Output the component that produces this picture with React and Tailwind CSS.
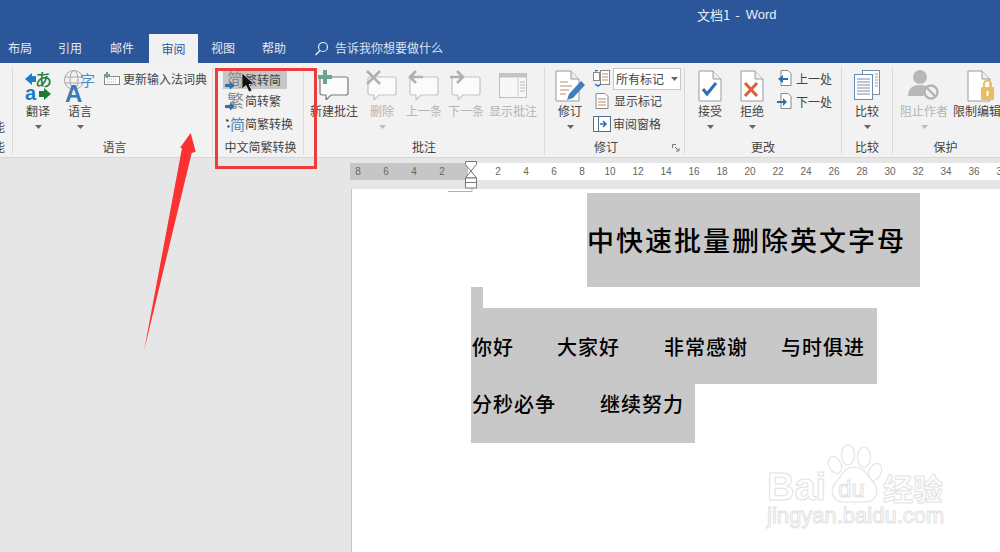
// App.jsx
import React from 'react';

const cjk = { fontFamily: '"Noto Sans CJK SC", sans-serif' };

const Caret = ({ muted }) => (
  <svg width="7" height="4" viewBox="0 0 7 4" className="block">
    <path d="M0 0h7L3.5 4z" fill={muted ? '#bdbdbd' : '#666'} />
  </svg>
);

// word page with folded corner, shared by the change buttons
const Page = ({ children }) => (
  <svg width="26" height="32" viewBox="0 0 26 32">
    <path d="M2 1h14l8 8v22H2z" fill="#fff" stroke="#9a9a9a" />
    <path d="M16 1v8h8" fill="#eee" stroke="#9a9a9a" />
    {children}
  </svg>
);

const Bubble = ({ color = '#7a7a7a' }) => (
  <g fill="#fbfbfb" stroke={color} strokeWidth="1.2">
    <path d="M4 7h24a2 2 0 0 1 2 2v14a2 2 0 0 1-2 2H13l-5 5v-5H4a2 2 0 0 1-2-2V9a2 2 0 0 1 2-2z" />
  </g>
);

const NewComment = () => (
  <svg width="32" height="30" viewBox="0 0 32 30">
    <Bubble />
    <path d="M5 0h4v5h5v4H9v5H5V9H0V5h5z" fill="#6ba58f" />
  </svg>
);
const DeleteComment = () => (
  <svg width="32" height="30" viewBox="0 0 32 30">
    <Bubble color="#c4c4c4" />
    <path d="M1 1l13 13M14 1L1 14" stroke="#b0b0b0" strokeWidth="2.6" />
  </svg>
);
const PrevComment = () => (
  <svg width="32" height="30" viewBox="0 0 32 30">
    <Bubble color="#c4c4c4" />
    <path d="M15 7H3M8 1L2 7l6 6" stroke="#b0b0b0" strokeWidth="2.6" fill="none" />
  </svg>
);
const NextComment = () => (
  <svg width="32" height="30" viewBox="0 0 32 30">
    <Bubble color="#c4c4c4" />
    <path d="M0 7h12M7 1l6 6-6 6" stroke="#b0b0b0" strokeWidth="2.6" fill="none" />
  </svg>
);
const ShowComments = () => (
  <svg width="28" height="28" viewBox="0 0 28 28">
    <rect x="0.5" y="3.5" width="27" height="24" fill="#f7f7f7" stroke="#c0c0c0" />
    <rect x="0.5" y="3.5" width="27" height="4" fill="#c4c4c4" />
    <path d="M19 8v20" stroke="#cfcfcf" />
    <path d="M21 12h5M21 15h5M21 18h5M21 21h5" stroke="#bdbdbd" />
  </svg>
);

const TranslateIcon = () => (
  <svg width="30" height="32" viewBox="0 0 30 32">
    <text x="12" y="16" fontSize="17" fontWeight="500" fill="#2c7a3d" style={cjk}>あ</text>
    <path d="M2 9l7-6v3h4v6H9v3z" fill="#1e7cc8" />
    <text x="2" y="30" fontSize="20" fontWeight="700" fill="#1e7cc8" style={{ fontFamily: '"Liberation Sans", sans-serif' }}>a</text>
    <path d="M28 24l-7 6v-3h-5v-6h5v-3z" fill="#1f7a38" />
  </svg>
);

const LanguageIcon = () => (
  <svg width="34" height="33" viewBox="0 0 34 33">
    <g fill="none" stroke="#a8a8a8">
      <circle cx="11" cy="10" r="9.5" />
      <ellipse cx="11" cy="10" rx="4" ry="9.5" />
      <path d="M2 7h18M2 13h18" />
    </g>
    <text x="17" y="16" fontSize="15" fill="#3f8fc9" style={cjk}>字</text>
    <text x="2" y="32" fontSize="24" fontWeight="700" fill="#3a78b8" style={{ fontFamily: '"Liberation Sans", sans-serif' }}>A</text>
  </svg>
);

const KeyboardIcon = () => (
  <svg width="16" height="14" viewBox="0 0 16 14">
    <rect x="0.5" y="4.5" width="15" height="8" fill="#fff" stroke="#888" />
    <path d="M3 7h10M3 10h10" stroke="#aaa" strokeDasharray="1 1" />
    <path d="M2 0h2v2h2v2H4v2H2V4H0V2h2z" fill="#6ba58f" />
  </svg>
);

const ConvertIcon = ({ glyph, arrow = true, blue }) => (
  <svg width="20" height="20" viewBox="0 0 20 20">
    <text x={blue ? 5 : 2} y="16" fontSize={blue ? 15 : 17} fill={blue ? '#4a86b8' : '#8a8a8a'} style={cjk}>{glyph}</text>
    {arrow ? (
      <path d="M0 14h5v-2.500l5 4-5 4V17H0z" fill="#2f6fb0" />
    ) : (
      <path d="M1 5l3 1-1 2-2-1zM3 11l2 1-1 2-2-1z" fill="#555" />
    )}
  </svg>
);

const TrackIcon = () => (
  <svg width="32" height="32" viewBox="0 0 32 32">
    <path d="M2 1h15l8 8v22H2z" fill="#fff" stroke="#999" />
    <path d="M17 1v8h8" fill="#eee" stroke="#999" />
    <path d="M6 12h8M6 16h12M6 20h9M6 24h6" stroke="#b98f6a" />
    <path d="M13 30l2-6L27 11l4 4-12 13z" fill="#3f7fbf" />
  </svg>
);

const SmallPage = () => (
  <svg width="14" height="16" viewBox="0 0 14 16">
    <path d="M1 .5h9l3 3v12H1z" fill="#fff" stroke="#888" />
    <path d="M3 6h8M3 9h8M3 12h8" stroke="#b98f6a" />
  </svg>
);

const MarkupIcon = () => (
  <svg width="18" height="18" viewBox="0 0 18 18">
    <rect x="7.5" y="0.5" width="9" height="14" fill="#fff" stroke="#888" />
    <path d="M9 4h6M9 7h6M9 10h6" stroke="#b98f6a" />
    <rect x="0.5" y="2.5" width="6" height="8" fill="#fff" stroke="#888" />
    <path d="M2 14l3 2 3-2M2 1l3-1" stroke="#2f6fb0" fill="none" strokeWidth="1.5" />
  </svg>
);

const PaneIcon = () => (
  <svg width="18" height="16" viewBox="0 0 18 16">
    <rect x="0.5" y="0.5" width="17" height="15" fill="#fff" stroke="#4d6f96" />
    <path d="M5.5 1v14" stroke="#4d6f96" />
    <path d="M7 8h5M10 5l3 3-3 3" stroke="#2f6fb0" strokeWidth="1.6" fill="none" />
  </svg>
);

const AcceptIcon = () => (
  <Page>
    <path d="M6 19l4 5 9-11" stroke="#2f6fb0" strokeWidth="3" fill="none" />
  </Page>
);
const RejectIcon = () => (
  <Page>
    <path d="M6 13l12 13M18 13L6 26" stroke="#d9603b" strokeWidth="3" />
  </Page>
);

const ChangeNavIcon = ({ flip }) => (
  <svg width="16" height="17" viewBox="0 0 16 17">
    <path d="M4 .5h7l3 3v12H4z" fill="#fff" stroke="#888" />
    {flip ? (
      <path d="M0 8h6V5l4 4-4 4v-3H0z" fill="#2f6fb0" />
    ) : (
      <path d="M11 8H6V5L1 9l5 4v-3h5z" fill="#2f6fb0" />
    )}
  </svg>
);

const CompareIcon = () => (
  <svg width="26" height="30" viewBox="0 0 26 30">
    <rect x="8.5" y="0.5" width="17" height="24" fill="#fff" stroke="#7d8da0" />
    <rect x="0.5" y="4.5" width="18" height="25" fill="#fff" stroke="#5f8db8" />
    <path d="M3 9h13M3 12h13M3 15h13M3 18h13M3 21h13M3 24h13" stroke="#7d8da0" />
    <path d="M21 4h3M21 7h3M21 10h3M21 13h3M21 16h3" stroke="#999" />
  </svg>
);

const BlockAuthorIcon = () => (
  <svg width="32" height="30" viewBox="0 0 32 30">
    <circle cx="12" cy="7" r="7" fill="#b8b8b8" />
    <path d="M0 26c0-8 5-11 12-11s9 3 10 5l-7 6z" fill="#b8b8b8" />
    <circle cx="23" cy="22" r="6.5" fill="#f1f1f1" stroke="#b4b4b4" strokeWidth="2.4" />
    <path d="M18.5 17.5l9 9" stroke="#b4b4b4" strokeWidth="2.4" />
  </svg>
);

const RestrictIcon = () => (
  <svg width="28" height="32" viewBox="0 0 28 32" className="ml-[8px]">
    <path d="M1 1h14l8 8v22H1z" fill="#fff" stroke="#9a9a9a" />
    <path d="M15 1v8h8" fill="#eee" stroke="#9a9a9a" />
    <rect x="14" y="17" width="13" height="13" rx="1" fill="#eabd62" />
    <path d="M17 17v-3a3.5 3.5 0 0 1 7 0v3" stroke="#eabd62" strokeWidth="2" fill="none" />
    <rect x="19.5" y="21" width="2" height="5" fill="#fff" />
  </svg>
);

const BigButton = ({ icon, label, width, caret, muted, className = '' }) => (
  <div className={`flex flex-col items-center shrink-0 ${className}`} style={{ width }}>
    <div className="flex items-start justify-center h-[33px]">{icon}</div>
    <span className={`text-[12px] leading-[16px] whitespace-nowrap ${muted ? 'text-[#b4b4b4]' : 'text-[#444]'}`}>{label}</span>
    {caret && <div className="mt-[6px]"><Caret muted={muted} /></div>}
  </div>
);

const Group = ({ width, label, children, noBorder }) => (
  <div
    className={`relative flex flex-col shrink-0 mt-[4px] mb-[2px] ${noBorder ? '' : 'border-r border-[#dadada]'}`}
    style={{ width }}
  >
    <div className="flex-1 flex items-start min-h-0">{children}</div>
    <div className="h-[18px] -mb-[1px] text-center text-[12px] leading-[18px] text-[#444] whitespace-nowrap">{label}</div>
  </div>
);

const SmallRow = ({ icon, label, className = 'h-[23px]' }) => (
  <div className={`flex items-center text-[12px] text-[#444] whitespace-nowrap ${className}`}>
    {icon}
    <span>{label}</span>
  </div>
);

const tabs = [
  ['布局', 'w-[50px]'],
  ['引用', 'w-[52px]'],
  ['邮件', 'w-[39px]'],
];

const leftNums = [8, 6, 4, 2];
const rightNums = [2, 4, 6, 8, 10, 12, 14, 16, 18, 20, 22, 24, 26, 28, 30, 32, 34, 36, 38];

export default function App() {
  return (
    <div className="relative w-[1000px] h-[552px] overflow-hidden bg-[#e6e6e6] flex flex-col" style={cjk}>
      {/* title bar */}
      <div className="h-[35px] bg-[#2b579a] flex items-center pb-[6px] pl-[697px] text-[13px] text-[#e8eef7] shrink-0">
        <span>文档1</span>
        <span className="ml-[5px]">-</span>
        <span className="ml-[6px]" style={{ fontFamily: '"Liberation Sans", sans-serif' }}>Word</span>
      </div>

      {/* tabs */}
      <div className="h-[28px] bg-[#2b579a] flex items-end text-[12px] text-[#e3eaf4] shrink-0 pl-[8px]">
        {tabs.map(([t, w]) => (
          <div key={t} className={`${w} h-full flex items-center pb-[2px] shrink-0`}>{t}</div>
        ))}
        <div className="w-[49px] h-[29px] bg-[#f1f1f1] text-[#2b579a] flex items-center justify-center shrink-0">审阅</div>
        <div className="w-[51px] h-full flex items-center pb-[2px] pl-[13px] shrink-0">视图</div>
        <div className="w-[52px] h-full flex items-center pb-[2px] pl-[13px] shrink-0">帮助</div>
        <div className="h-full flex items-center pb-[2px] ml-[13px] text-[#dbe4f0]">
          <svg width="15" height="15" viewBox="0 0 15 15" className="mr-[6px]">
            <circle cx="9" cy="6" r="4.5" fill="none" stroke="#e3eaf4" strokeWidth="1.2" />
            <path d="M6 9.500L1.500 14" stroke="#e3eaf4" strokeWidth="1.4" />
          </svg>
          告诉我你想要做什么
        </div>
      </div>

      {/* ribbon */}
      <div className="h-[95px] bg-[#f2f2f2] border-b border-[#d6d6d6] flex shrink-0 overflow-hidden">
        <Group width={13} label="">
          <div className="w-[5px] overflow-hidden text-[#444] text-[12px] leading-[20px] pt-[50px]">
            <div className="-ml-[7px] w-[12px]">能</div>
            <div className="-ml-[7px] w-[12px]">能</div>
          </div>
        </Group>

        <Group width={200} label={<span className="ml-[4px]">语言</span>}>
          <div className="flex pt-[3px] pl-[7px]">
            <BigButton width={36} caret label="翻译" icon={<TranslateIcon />} />
            <BigButton width={48} caret label="语言" icon={<LanguageIcon />} />
            <SmallRow className="h-[23px] -mt-[3px]" label="更新输入法词典" icon={<span className="mr-[3px] flex"><KeyboardIcon /></span>} />
          </div>
        </Group>

        <Group width={91} label={<span className="ml-[5px]">中文简繁转换</span>}>
          <div className="flex flex-col pl-[10px] pt-[3px] w-full">
            <SmallRow className="bg-[#c6c6c6] w-[64px] h-[19px] pl-[2px]" label="繁转简" icon={<span className="flex"><ConvertIcon glyph="简" /></span>} />
            <SmallRow className="h-[23px] pl-[2px]" label="简转繁" icon={<span className="flex"><ConvertIcon glyph="繁" /></span>} />
            <SmallRow className="h-[23px] pl-[2px]" label="简繁转换" icon={<span className="flex"><ConvertIcon glyph="简" arrow={false} blue /></span>} />
          </div>
        </Group>

        <Group width={241} label="批注">
          <div className="flex pt-[3px] pl-[6px]">
            <BigButton width={48} label="新建批注" icon={<NewComment />} />
            <BigButton width={48} muted caret label="删除" icon={<DeleteComment />} />
            <BigButton width={42} className="-ml-[3px]" muted label="上一条" icon={<PrevComment />} />
            <BigButton width={42} muted label="下一条" icon={<NextComment />} />
            <BigButton width={52} muted label="显示批注" icon={<ShowComments />} />
          </div>
        </Group>

        <Group width={140} label={<span className="-ml-[17px]">修订</span>}>
          <div className="flex pt-[3px] pl-[5px]">
            <BigButton width={40} caret label="修订" icon={<TrackIcon />} />
            <div className="flex flex-col pl-[3px] -mt-[2px]">
              <div className="flex items-center h-[21px]">
                <span className="flex mr-[2px]"><MarkupIcon /></span>
                <div className="w-[68px] h-[22px] bg-white border border-[#c8c8c8] flex items-center justify-between px-[2px] text-[12px] text-[#444]">
                  所有标记<Caret />
                </div>
              </div>
              <SmallRow className="h-[23px] pl-[2px]" label="显示标记" icon={<span className="flex mr-[5px]"><SmallPage /></span>} />
              <SmallRow label="审阅窗格" icon={<span className="flex mr-[2px]"><PaneIcon /></span>} />
            </div>
          </div>
          <svg width="8" height="8" viewBox="0 0 8 8" className="absolute right-[4px] bottom-[3px]">
            <path d="M.5 4V.5H4M3 3l4 4M4 7h3V4" stroke="#777" fill="none" />
          </svg>
        </Group>

        <Group width={157} label="更改">
          <div className="flex pt-[3px] pl-[4px]">
            <BigButton width={42} caret label="接受" icon={<AcceptIcon />} />
            <BigButton width={42} caret label="拒绝" icon={<RejectIcon />} />
            <div className="flex flex-col pl-[4px] -mt-[3px]">
              <SmallRow label="上一处" icon={<span className="flex mr-[3px]"><ChangeNavIcon /></span>} />
              <SmallRow label="下一处" icon={<span className="flex mr-[3px]"><ChangeNavIcon flip /></span>} />
            </div>
          </div>
        </Group>

        <Group width={51} label="比较">
          <div className="flex pt-[3px] w-full">
            <BigButton width={50} caret label="比较" icon={<CompareIcon />} />
          </div>
        </Group>

        <Group width={107} noBorder label={<span className="-ml-[2px]">保护</span>}>
          <div className="flex pt-[3px] pl-[7px]">
            <BigButton width={48} muted caret label="阻止作者" icon={<BlockAuthorIcon />} />
            <BigButton width={48} className="ml-[5px]" label="限制编辑" icon={<RestrictIcon />} />
          </div>
        </Group>
      </div>

      {/* ruler */}
      <div className="flex h-[17px] mt-[5px] ml-[350px] shrink-0 relative text-[10px] text-[#666] leading-[18px]" style={{ fontFamily: '"Liberation Sans", sans-serif' }}>
        <div className="w-[118px] bg-[#c6c6c6] overflow-hidden flex shrink-0">
          {leftNums.map((n, i) => (
            <span key={n} className={`w-[28px] text-center shrink-0 ${i === 0 ? '-ml-[6px]' : ''}`}>{n}</span>
          ))}
        </div>
        <div className="flex-1 bg-white flex pl-[16px] overflow-hidden">
          {rightNums.map((n) => (
            <span key={n} className="w-[28px] text-center shrink-0">{n}</span>
          ))}
        </div>
        <svg width="14" height="30" viewBox="0 0 14 30" className="absolute left-[114px] -top-[2px]">
          <path d="M1.500.5h11v3L7 10 1.500 3.500zM7 10l5.500 7H1.500z" fill="#fff" stroke="#777" />
          <path d="M1.500 17h11v10h-11z" fill="#fff" stroke="#777" />
          <path d="M1.500 21.500h11" stroke="#777" />
        </svg>
      </div>

      {/* document */}
      <div className="flex-1 mt-[9px] ml-[351px] bg-white border-l border-[#c6c6c6] pl-[119px] relative">
        <svg width="26" height="4" viewBox="0 0 26 4" className="absolute left-[96px] top-0">
          <path d="M0 2.500h24V0" stroke="#b0b0b0" fill="none" />
        </svg>
        <div className="pt-[4px]">
          <div className="ml-[116px] w-[333px] h-[94px] bg-[#c8c8c8] flex items-center text-[27px] font-medium tracking-[2px] text-black whitespace-nowrap">
            中快速批量删除英文字母
          </div>
          <div className="w-[12px] h-[21px] bg-[#c8c8c8]" />
          <div className="w-[406px] h-[76px] bg-[#c8c8c8] flex items-center pt-[2px] text-[20px] font-medium tracking-[1px] text-black whitespace-nowrap">
            <span className="w-[86px] pl-[1px]">你好</span>
            <span className="w-[107px]">大家好</span>
            <span className="w-[117px]">非常感谢</span>
            <span>与时俱进</span>
          </div>
          <div className="w-[224px] h-[59px] bg-[#c8c8c8] flex pt-[5px] text-[20px] font-medium tracking-[1px] text-black whitespace-nowrap">
            <span className="w-[129px] pl-[1px]">分秒必争</span>
            <span>继续努力</span>
          </div>
        </div>
      </div>

      {/* red annotation box */}
      <div className="absolute left-[215px] top-[68px] w-[102px] h-[101px] border-[3px] border-[#ee3b3b] pointer-events-none" />

      {/* red arrow */}
      <svg width="1000" height="552" viewBox="0 0 1000 552" className="absolute inset-0 pointer-events-none">
        <path d="M190.700 133L195.700 151.700 191.700 153 144 351 182 148 180 147.700z" fill="#fb3232" />
        {/* mouse pointer */}
        <path d="M242 73v16l4-3.500 3 6.500 3-1.500-3-6 5-.5z" fill="#111" stroke="#fff" strokeWidth="0.6" />
      </svg>

      {/* watermark */}
      <svg width="240" height="110" viewBox="0 0 240 110" className="absolute left-[760px] top-[440px] pointer-events-none">
        <g fill="#fff" stroke="#e4e4e4" strokeWidth="1.2">
          <ellipse cx="75" cy="25" rx="6" ry="9" transform="rotate(-25 75 25)" />
          <ellipse cx="88" cy="15" rx="6.500" ry="10" />
          <ellipse cx="104" cy="17" rx="6.500" ry="10" />
          <ellipse cx="115" cy="32" rx="6" ry="9" transform="rotate(25 115 32)" />
          <path d="M94 27c10 0 14 9 19 15 7 8 4 20-8 20H84c-12 0-15-12-8-20 6-6 8-15 18-15z" />
        </g>
        <g style={{ fontFamily: '"Liberation Sans", sans-serif' }} fill="#fff" stroke="#e2e2e2" strokeWidth="1">
          <text x="7" y="60" fontSize="38" fontWeight="700">Bai</text>
          <text x="78" y="57" fontSize="24">du</text>
          <text x="7" y="83" fontSize="22">jingyan.baidu.com</text>
        </g>
        <text x="123" y="60" fontSize="30" fontWeight="700" fill="#fff" stroke="#e2e2e2" strokeWidth="1" style={cjk}>经验</text>
      </svg>
    </div>
  );
}
